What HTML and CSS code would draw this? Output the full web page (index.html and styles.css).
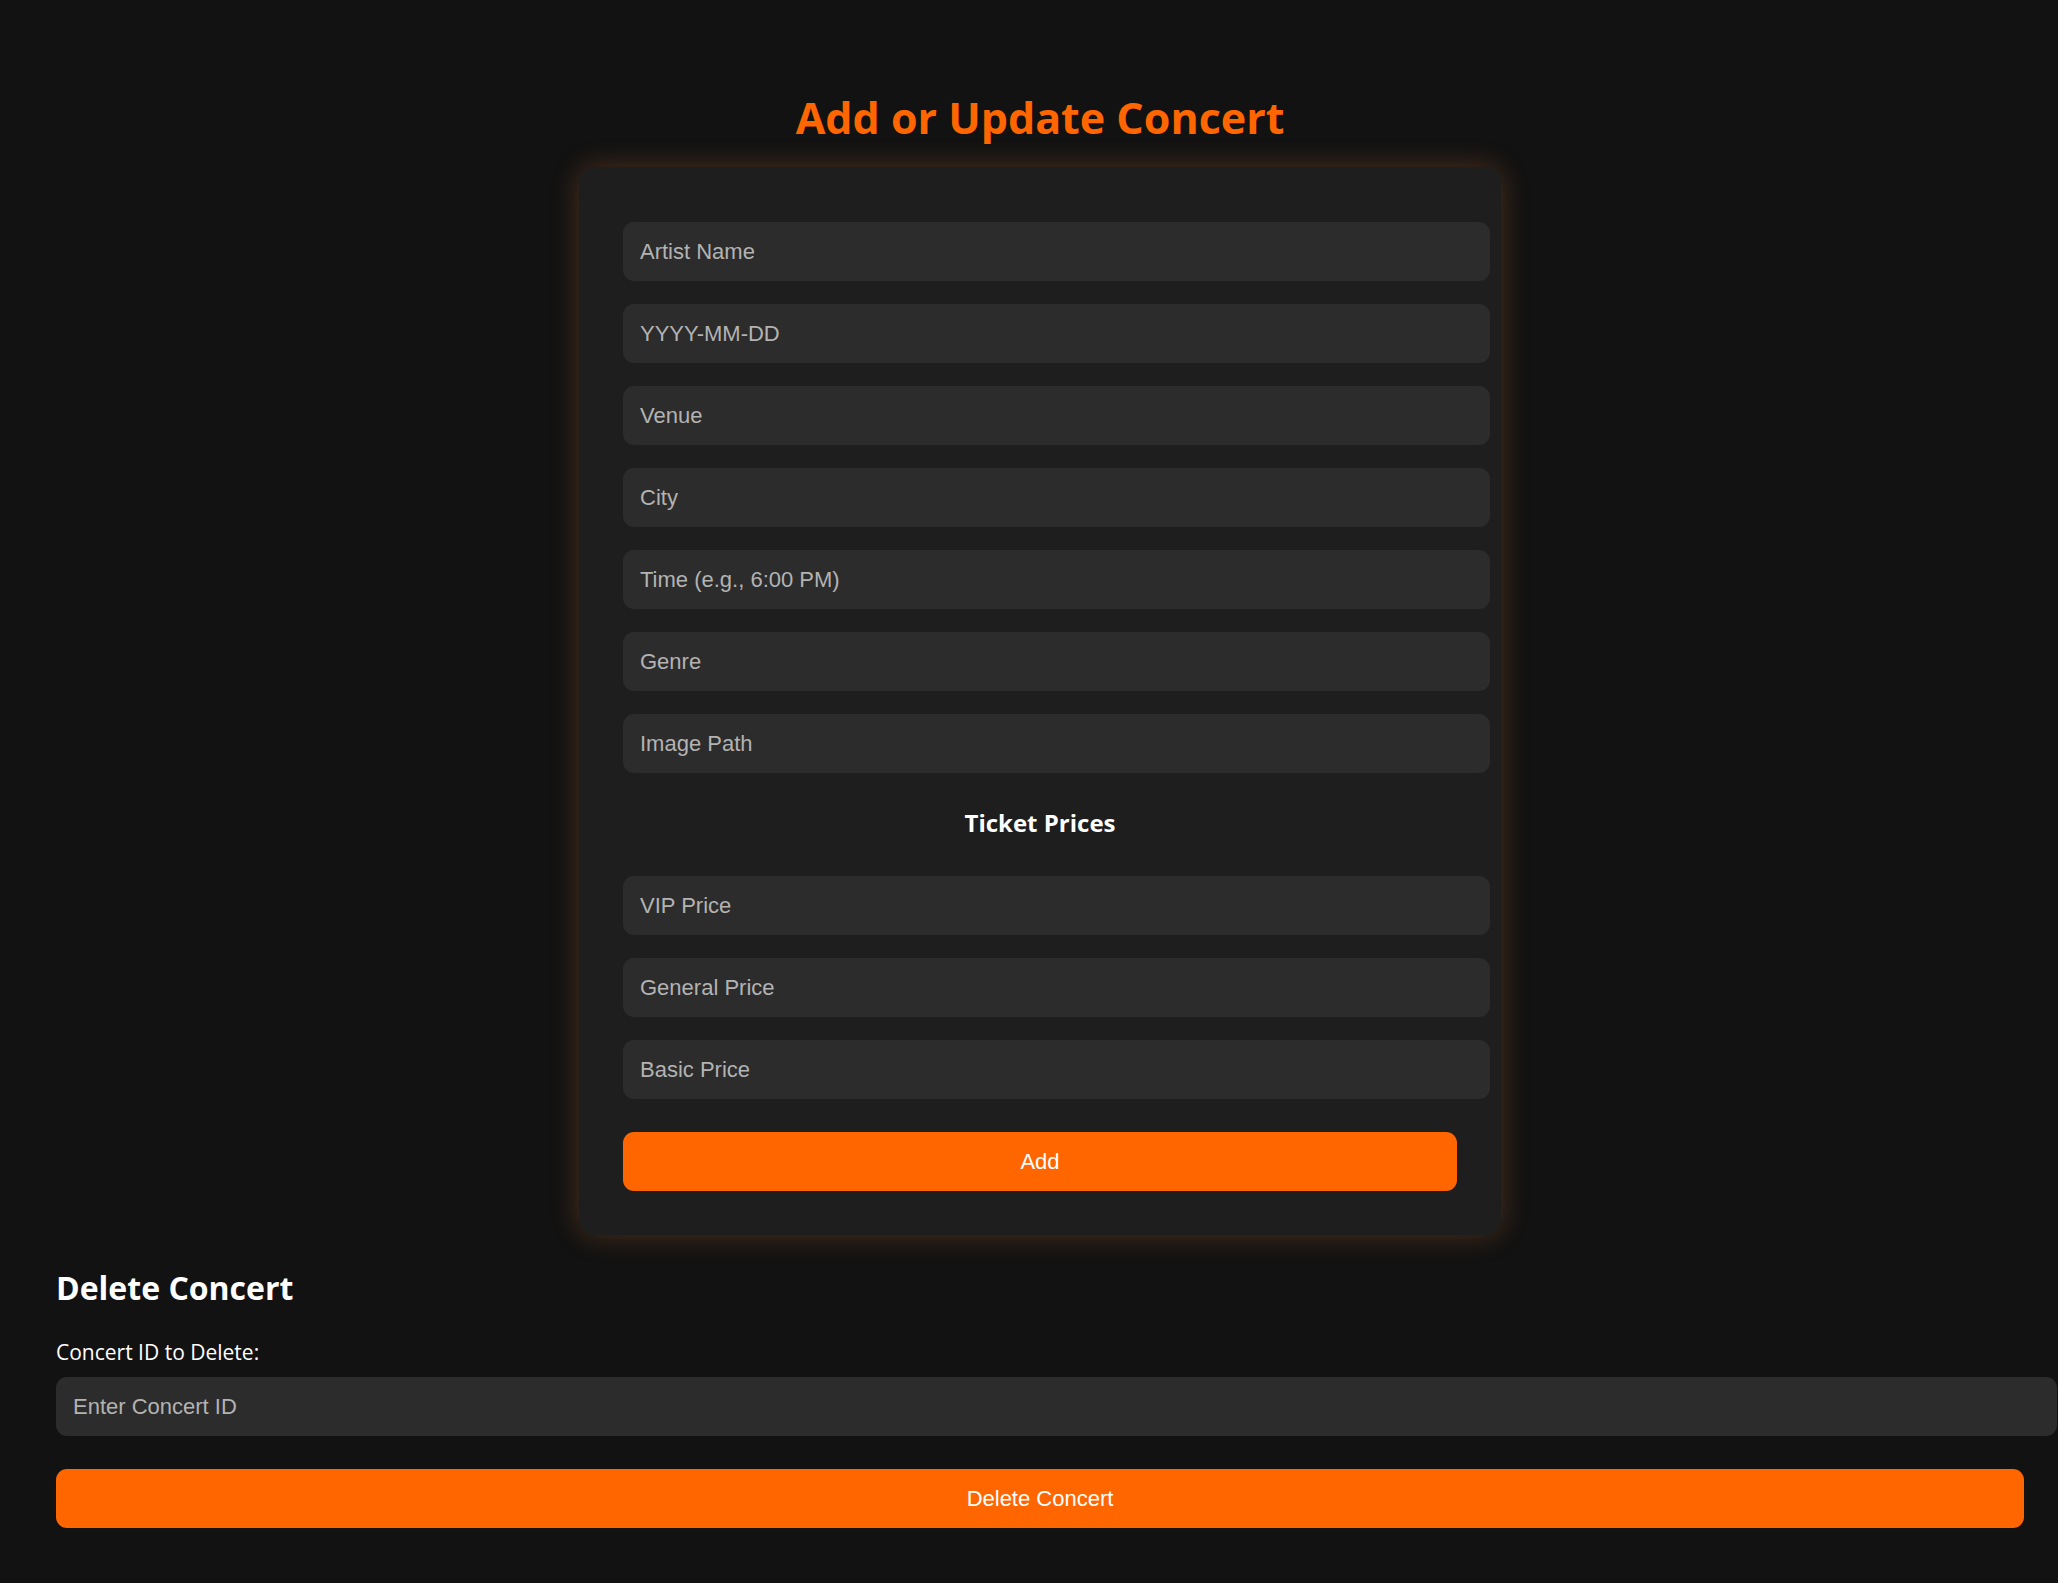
FILE: index.html
```html
<!DOCTYPE html>
<html lang="en">
<head>
  <meta charset="utf-8">
  <meta name="viewport" content="width=device-width, initial-scale=1">
  <title>Manage Concerts</title>
  <link rel="stylesheet" href="styles.css">
</head>
<body>
  <main class="page">
    <h1 class="page-title">Add or Update Concert</h1>
    <form class="card">
      <input class="field" type="text" placeholder="Artist Name" aria-label="Artist Name">
      <input class="field" type="text" placeholder="YYYY-MM-DD" aria-label="Date">
      <input class="field" type="text" placeholder="Venue" aria-label="Venue">
      <input class="field" type="text" placeholder="City" aria-label="City">
      <input class="field" type="text" placeholder="Time (e.g., 6:00 PM)" aria-label="Time">
      <input class="field" type="text" placeholder="Genre" aria-label="Genre">
      <input class="field" type="text" placeholder="Image Path" aria-label="Image Path">
      <h3 class="card-heading">Ticket Prices</h3>
      <input class="field" type="text" placeholder="VIP Price" aria-label="VIP Price">
      <input class="field" type="text" placeholder="General Price" aria-label="General Price">
      <input class="field" type="text" placeholder="Basic Price" aria-label="Basic Price">
      <button class="button" type="submit">Add</button>
    </form>

    <form class="delete-form">
      <h2 class="section-title">Delete Concert</h2>
      <label class="label" for="concert-id">Concert ID to Delete:</label>
      <input class="field" id="concert-id" type="text" placeholder="Enter Concert ID">
      <button class="button" type="submit">Delete Concert</button>
    </form>
  </main>
</body>
</html>
```
FILE: styles.css
```css
body {
  margin: 0;
  background: #121212;
  color: #fff;
  font-family: "Segoe UI", "Open Sans", "Noto Sans", sans-serif;
}

.page {
  padding: 88px 34px 54px 56px;
}

.page-title {
  margin: 0 0 19px;
  color: #ff6600;
  font-size: 43px;
  line-height: 60px;
  text-align: center;
}

.card {
  max-width: 834px;
  margin: 0 auto;
  padding: 44px;
  padding-top: 55px;
  border-radius: 16px;
  background: #1e1e1e;
  box-shadow: 0 0 28px rgba(255, 140, 64, 0.25);
}

/* Fields are content-box, so their padding extends past the column. */
.field {
  display: block;
  box-sizing: content-box;
  width: 100%;
  height: 59px;
  margin: 0 0 23px;
  padding: 0 16px 0 17px;
  border: 0;
  border-radius: 11px;
  background: #2c2c2c;
  color: #fff;
  font: 22px "Liberation Sans", Arial, sans-serif;
}

.field::placeholder {
  color: #b3b3b3;
  opacity: 1;
}

.card-heading {
  margin: 0 0 36px;
  padding-top: 10px;
  font-size: 24px;
  line-height: 34px;
  text-align: center;
}

.button {
  display: block;
  width: 100%;
  height: 59px;
  margin-top: 33px;
  padding: 0;
  border: 0;
  border-radius: 11px;
  background: #ff6600;
  color: #fff;
  font: 22px "Liberation Sans", Arial, sans-serif;
  cursor: pointer;
}

.section-title {
  margin: 0 0 27px;
  padding-top: 31px;
  font-size: 32px;
  line-height: 44px;
}

.label {
  display: block;
  margin-bottom: 10px;
  font-size: 21px;
  line-height: 30px;
}
```
